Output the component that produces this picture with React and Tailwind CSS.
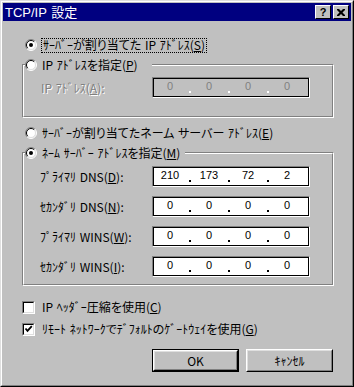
import React from 'react';

const Radio = ({ checked }) => (
  <svg width="12" height="12" viewBox="0 0 12 12" className="shrink-0">
    <circle cx="6" cy="6" r="5" fill="#fff" />
    <path d="M2.1 9.9 A5.5 5.5 0 0 1 9.9 2.1" fill="none" stroke="#808080" />
    <path d="M9.9 2.1 A5.5 5.5 0 0 1 2.1 9.9" fill="none" stroke="#fff" />
    <path d="M2.8 9.2 A4.5 4.5 0 0 1 9.2 2.8" fill="none" stroke="#000" />
    <path d="M9.2 2.8 A4.5 4.5 0 0 1 2.8 9.2" fill="none" stroke="#dfdfdf" />
    {checked && <circle cx="6" cy="6" r="2" fill="#000" />}
  </svg>
);

const Checkbox = ({ checked }) => (
  <span className="w-[13px] h-[13px] shrink-0 border border-t-[#808080] border-l-[#808080] border-b-white border-r-white">
    <span className="block w-full h-full bg-white border border-t-black border-l-black border-b-[#dfdfdf] border-r-[#dfdfdf]">
      {checked && (
        <svg width="9" height="9" viewBox="0 0 9 9" className="block">
          <path d="M1.5 3.5 L3.5 5.8 L7.8 1.2" fill="none" stroke="#000" strokeWidth="1.8" />
        </svg>
      )}
    </span>
  </span>
);

const Key = ({ children }) => <span className="underline underline-offset-1">{children}</span>;

const IpField = ({ values, disabled }) => (
  <div className="w-[158px] h-[21px] border border-t-[#808080] border-l-[#808080] border-b-white border-r-white">
    <div className={`flex h-full border border-black ${disabled ? 'bg-[#c0c0c0]' : 'bg-white'}`}>
      {values.map((v, i) => (
        <div key={i} className="flex">
          <div
            className={`w-[32px] flex justify-center pt-[2px] font-['Liberation_Sans',sans-serif] text-[11px] leading-none ${
              disabled ? 'text-[#808080]' : 'text-black'
            }`}
          >
            {v}
          </div>
          {i < 3 && (
            <div className="w-[7px] flex items-end justify-center pb-[3px]">
              <div className={`w-[2px] h-[2px] ${disabled ? 'bg-white' : 'bg-black'}`} />
            </div>
          )}
        </div>
      ))}
    </div>
  </div>
);

const Button = ({ children, isDefault }) => (
  <div className={`w-[87px] h-[23px] ${isDefault ? 'border border-black' : ''}`}>
    <div className="h-full border border-t-white border-l-white border-b-black border-r-black">
      <div className="h-full flex items-center justify-center border border-t-[#dfdfdf] border-l-[#dfdfdf] border-b-[#808080] border-r-[#808080]">
        {children}
      </div>
    </div>
  </div>
);

const dnsRows = [
  { label: 'ﾌﾟﾗｲﾏﾘ DNS', key: 'D', values: ['210', '173', '72', '2'] },
  { label: 'ｾｶﾝﾀﾞﾘ DNS', key: 'N', values: ['0', '0', '0', '0'] },
  { label: 'ﾌﾟﾗｲﾏﾘ WINS', key: 'W', values: ['0', '0', '0', '0'] },
  { label: 'ｾｶﾝﾀﾞﾘ WINS', key: 'I', values: ['0', '0', '0', '0'] },
];

export default function App() {
  return (
    <div className="w-[354px] h-[387px] bg-[#c0c0c0] border border-t-[#dfdfdf] border-l-[#dfdfdf] border-b-black border-r-black font-['Noto_Sans_CJK_JP',sans-serif] [font-feature-settings:'palt'] [word-spacing:1px] text-[12px] text-black select-none">
      <div className="h-full p-[1px] border border-t-white border-l-white border-b-[#808080] border-r-[#808080]">
        {/* Title bar */}
        <div className="h-[18px] bg-[#000080] flex items-center justify-between pl-[2px] pr-[2px]">
          <span className="text-white text-[13px] leading-none font-['Liberation_Sans','Noto_Sans_CJK_JP',sans-serif]">
            TCP/IP 設定
          </span>
          <div className="flex gap-[2px]">
            <div className="w-[16px] h-[14px] bg-[#c0c0c0] border border-t-white border-l-white border-b-black border-r-black flex items-center justify-center text-[11px] font-bold leading-none font-['Liberation_Sans',sans-serif]">
              ?
            </div>
            <div className="w-[16px] h-[14px] bg-[#c0c0c0] border border-t-white border-l-white border-b-black border-r-black flex items-center justify-center">
              <svg width="8" height="7" viewBox="0 0 8 7">
                <path d="M0 0h2l2 2 2-2h2v1L5.5 3.5 8 6v1H6L4 5 2 7H0V6l2.5-2.5L0 1z" fill="#000" />
              </svg>
            </div>
          </div>
        </div>

        {/* Content */}
        <div className="flex flex-col">
          <div className="mt-[16px] h-[16px] flex items-center pl-[22px] gap-[4px]">
            <Radio checked />
            <span className="border border-dotted border-black px-[1px] h-[15px] flex items-center">
              ｻｰﾊﾞｰが割り当てた IP ｱﾄﾞﾚｽ(<Key>S</Key>)
            </span>
          </div>

          <div className="relative mt-[11px] ml-[19px] w-[312px] h-[54px] border border-t-[#808080] border-l-[#808080] border-b-white border-r-white">
            <div className="h-full border border-t-white border-l-white border-b-[#808080] border-r-[#808080] pl-[17px] pt-[11px]">
              <div className="flex items-center">
                <span className="w-[111px] text-[#808080] [text-shadow:1px_1px_0_#fff]">
                  IP ｱﾄﾞﾚｽ(<Key>A</Key>):
                </span>
                <IpField values={['0', '0', '0', '0']} disabled />
              </div>
            </div>
            <div className="absolute -top-[8px] left-[2px] h-[16px] flex items-center gap-[5px] bg-[#c0c0c0] pr-[14px]">
              <Radio />
              <span>
                IP ｱﾄﾞﾚｽを指定(<Key>P</Key>)
              </span>
            </div>
          </div>

          <div className="mt-[7px] h-[16px] flex items-center pl-[22px] gap-[5px]">
            <Radio />
            <span>
              ｻｰﾊﾞｰが割り当てたネーム サーバー ｱﾄﾞﾚｽ(<Key>E</Key>)
            </span>
          </div>

          <div className="relative mt-[11px] ml-[19px] w-[312px] h-[134px] border border-t-[#808080] border-l-[#808080] border-b-white border-r-white">
            <div className="h-full border border-t-white border-l-white border-b-[#808080] border-r-[#808080] pl-[16px] pt-[12px] flex flex-col gap-[9px]">
              {dnsRows.map((r) => (
                <div key={r.key} className="flex items-center">
                  <span className="w-[112px]">
                    {r.label}(<Key>{r.key}</Key>):
                  </span>
                  <IpField values={r.values} />
                </div>
              ))}
            </div>
            <div className="absolute -top-[8px] left-[2px] h-[16px] flex items-center gap-[5px] bg-[#c0c0c0] pr-[5px]">
              <Radio checked />
              <span>
                ﾈｰﾑ ｻｰﾊﾞｰ ｱﾄﾞﾚｽを指定(<Key>M</Key>)
              </span>
            </div>
          </div>

          <div className="mt-[13px] h-[16px] flex items-center pl-[19px] gap-[7px]">
            <Checkbox />
            <span>
              IP ﾍｯﾀﾞｰ圧縮を使用(<Key>C</Key>)
            </span>
          </div>
          <div className="mt-[6px] h-[16px] flex items-center pl-[19px] gap-[7px]">
            <Checkbox checked />
            <span>
              ﾘﾓｰﾄ ﾈｯﾄﾜｰｸでﾃﾞﾌｫﾙﾄのｹﾞｰﾄｳｪｲを使用(<Key>G</Key>)
            </span>
          </div>

          <div className="mt-[12px] flex gap-[7px] pl-[149px]">
            <Button isDefault>OK</Button>
            <Button>ｷｬﾝｾﾙ</Button>
          </div>
        </div>
      </div>
    </div>
  );
}
